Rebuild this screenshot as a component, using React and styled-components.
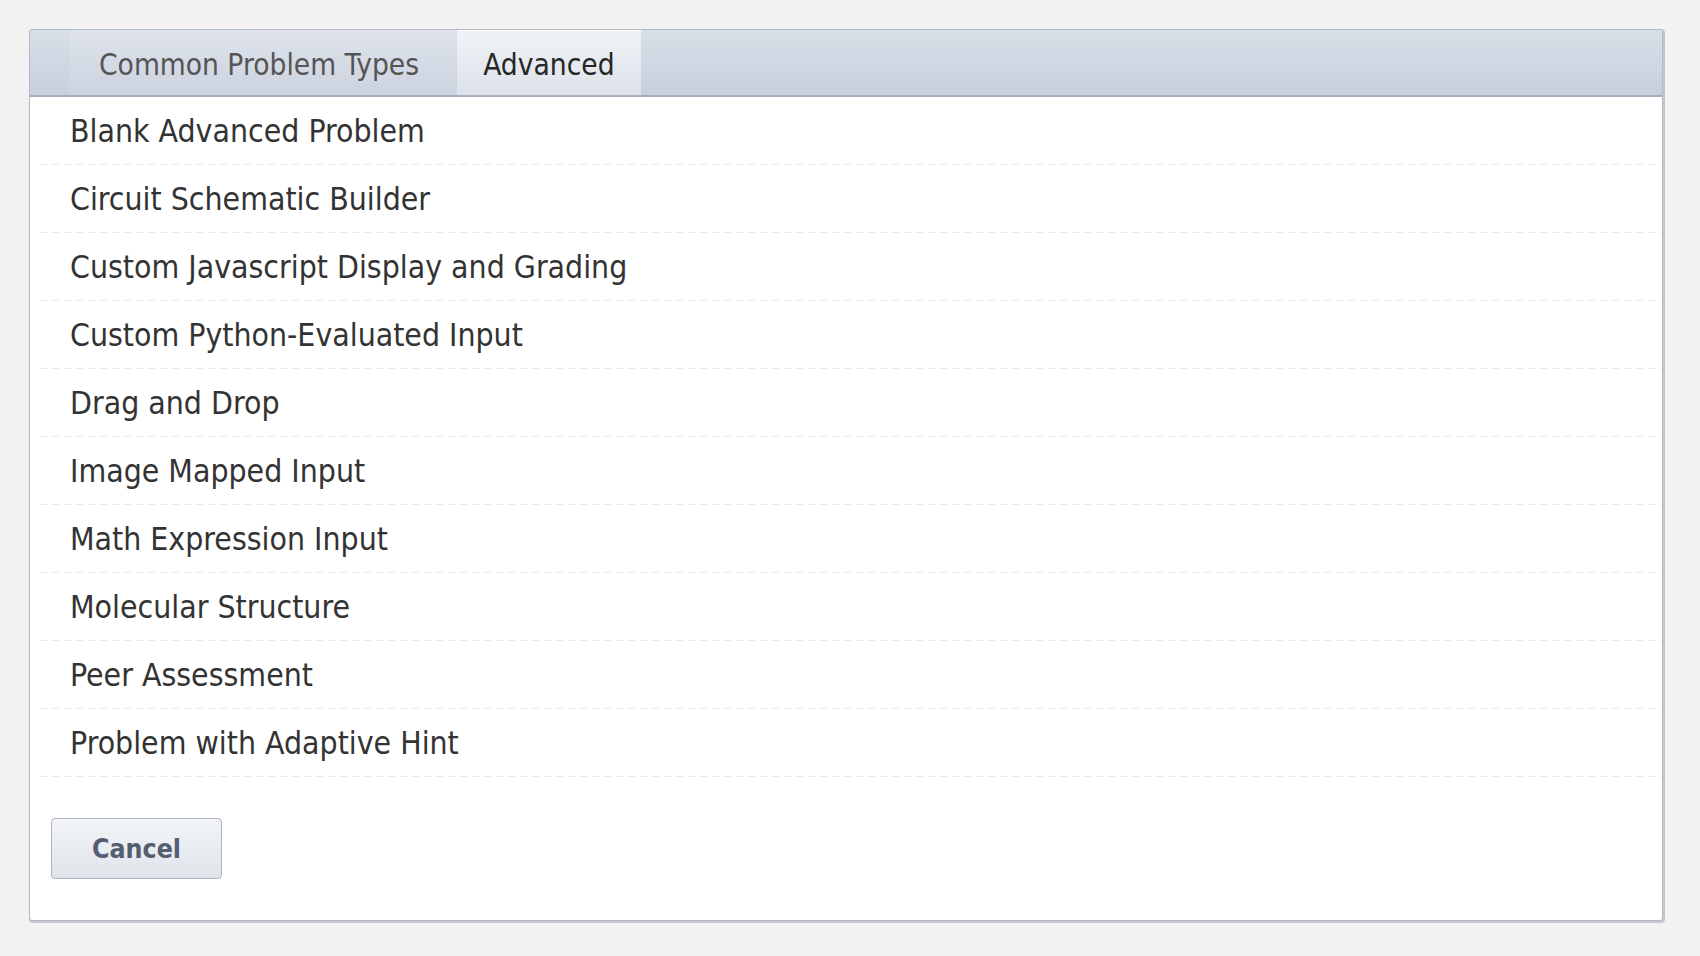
import React, { useState } from 'react'
import styled, { createGlobalStyle } from 'styled-components'

const GlobalStyle = createGlobalStyle`
  html, body {
    margin: 0;
    padding: 0;
    background: #f2f2f2;
  }
  body {
    font-family: "DejaVu Sans Condensed", "DejaVu Sans", sans-serif;
    font-stretch: condensed;
  }
`

const Page = styled.div`
  padding: 29px 37px 29px 29px;
`

const Card = styled.div`
  background: #fff;
  border: 1px solid #b4b9c5;
  border-radius: 3px;
  box-shadow: 1px 1px 0 1px #c3c7d1;
  overflow: hidden;
`

const Header = styled.div`
  display: flex;
  height: 65px;
  padding-left: 39px;
  background: linear-gradient(#d9dfe8, #c7cfdc);
  border-bottom: 2px solid #a7afbc;
`

const Tab = styled.button`
  display: flex;
  align-items: center;
  justify-content: center;
  padding: 4px ${({ wide }) => (wide ? '38px 0 30px' : '26px 0')};
  border: 0;
  margin: 0;
  font-family: inherit;
  font-stretch: condensed;
  font-size: 29.6px;
  white-space: nowrap;
  cursor: pointer;
  color: #555;
  background: linear-gradient(#dfe4ec, #cbd3df);

  ${({ active }) =>
    active &&
    `
    color: #262626;
    background: linear-gradient(#f0f2f6, #dde2ea);
    box-shadow: inset 0 1px 0 #fff;
  `}
`

const List = styled.ul`
  list-style: none;
  margin: 0;
  padding: 0 0 0 8px;
`

const Row = styled.li`
  height: 67px;
  display: flex;
  align-items: center;
  padding-left: 32px;
  padding-bottom: 1px;
  font-size: 31.7px;
  color: #333;
  background-image: linear-gradient(to right, #e6e9ef 60%, transparent 0%);
  background-position: bottom;
  background-size: 12px 1px;
  background-repeat: repeat-x;
  cursor: pointer;
`

const Footer = styled.div`
  padding: 41px 0 41px 21px;
`

const Button = styled.button`
  width: 171px;
  height: 61px;
  border: 1px solid #aeb4c0;
  border-radius: 4px;
  background: linear-gradient(#f2f4f7, #e0e4ea);
  font-family: inherit;
  font-stretch: condensed;
  font-weight: bold;
  font-size: 26.5px;
  color: #545e70;
  cursor: pointer;
`

const tabs = ['Common Problem Types', 'Advanced']

const items = [
  'Blank Advanced Problem',
  'Circuit Schematic Builder',
  'Custom Javascript Display and Grading',
  'Custom Python-Evaluated Input',
  'Drag and Drop',
  'Image Mapped Input',
  'Math Expression Input',
  'Molecular Structure',
  'Peer Assessment',
  'Problem with Adaptive Hint',
]

export default function App() {
  const [active, setActive] = useState(1)

  return (
    <Page>
      <GlobalStyle />
      <Card>
        <Header>
          {tabs.map((t, i) => (
            <Tab key={t} wide={i === 0} active={i === active} onClick={() => setActive(i)}>
              {t}
            </Tab>
          ))}
        </Header>
        <List>
          {items.map(item => (
            <Row key={item}>{item}</Row>
          ))}
        </List>
        <Footer>
          <Button>Cancel</Button>
        </Footer>
      </Card>
    </Page>
  )
}
